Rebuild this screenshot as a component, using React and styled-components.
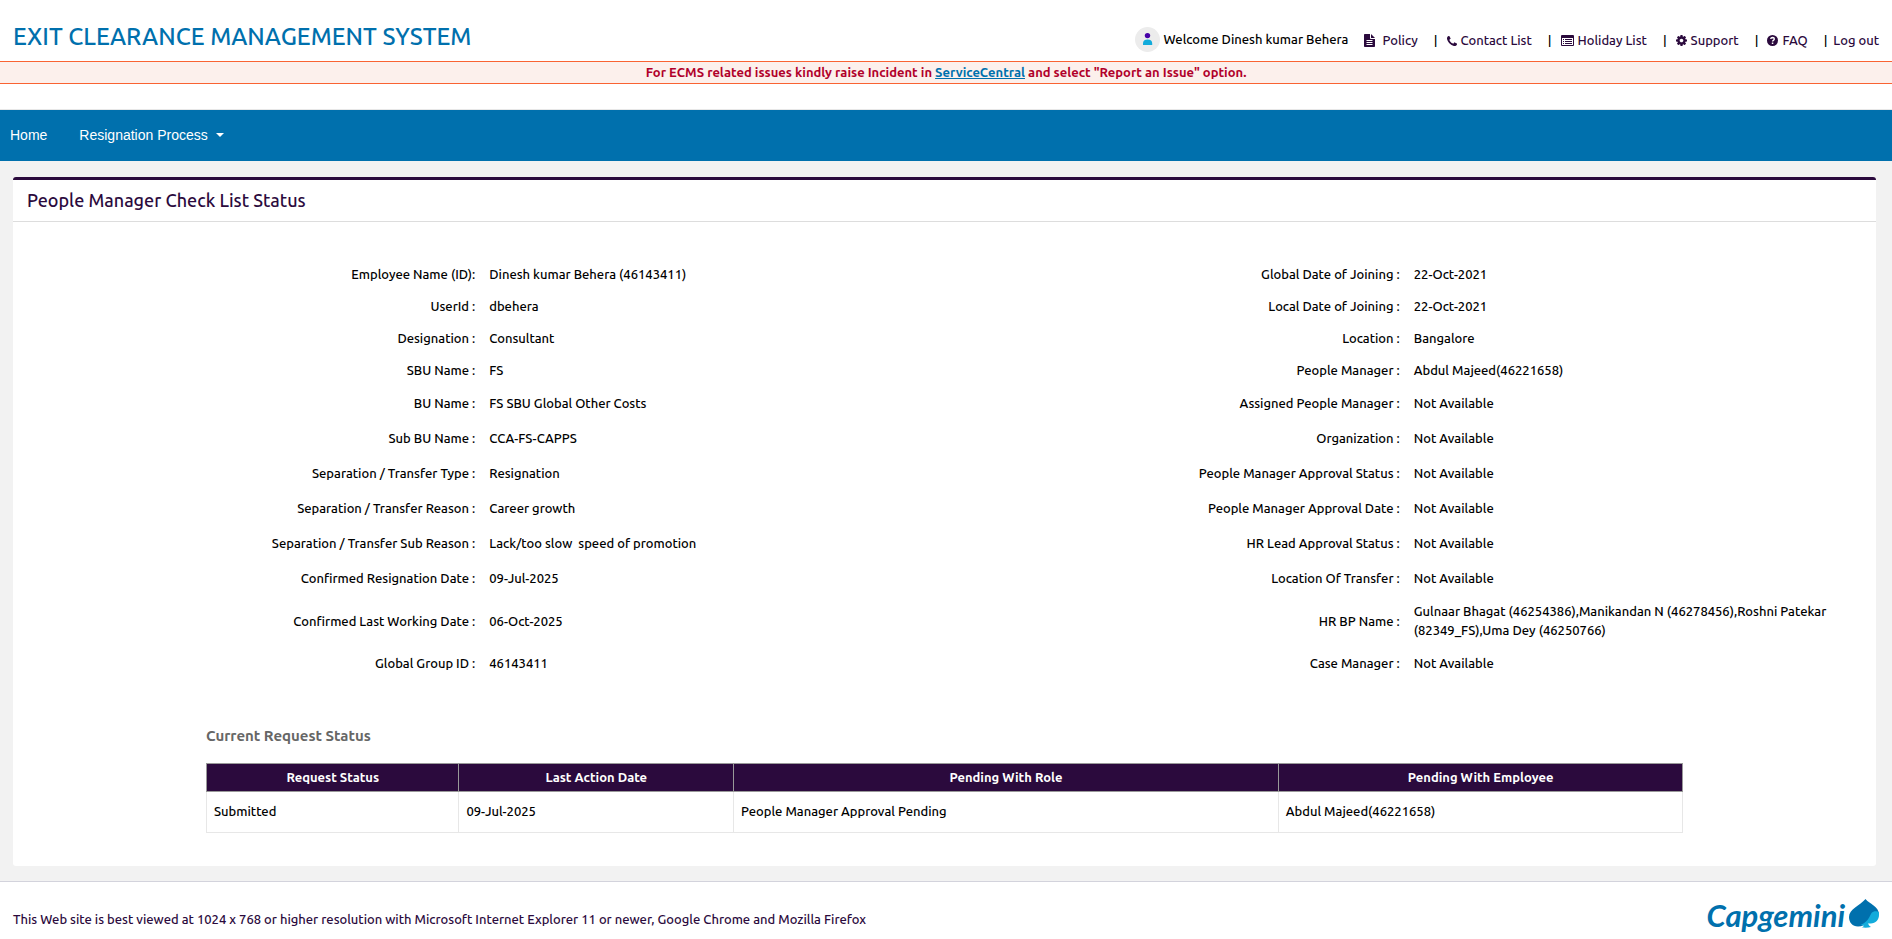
import React from "react";
import styled, { createGlobalStyle } from "styled-components";

const GlobalStyle = createGlobalStyle`
  * { box-sizing: border-box; }
  body {
    margin: 0;
    background: #fff;
    color: #000;
    font-family: Ubuntu, "Noto Sans", sans-serif;
    font-size: 13px;
    font-weight: 500;
    line-height: 19px;
  }
  h1, h2, h3, p, ul, dl, dd { margin: 0; padding: 0; }
`;

const Header = styled.header`
  display: flex;
  justify-content: space-between;
  align-items: flex-end;
  height: 61px;
  padding: 0 13px 9px;
`;

const SiteTitle = styled.h1`
  color: #0070ad;
  font-size: 24px;
  font-weight: 500;
  line-height: 30px;
`;

const UserArea = styled.div`
  display: flex;
  align-items: center;
  gap: 16px;
`;

const Welcome = styled.div`
  display: flex;
  align-items: center;
  gap: 4px;
`;

const UtilityList = styled.ul`
  display: flex;
  list-style: none;
  padding-top: 2px;
`;

const UtilityItem = styled.li`
  display: flex;
  align-items: center;

  & + &::before {
    content: "|";
    margin: 0 9px 0 16px;
  }

  &:last-child::before {
    margin-right: 6px;
  }
`;

const UtilityLink = styled.a`
  display: flex;
  align-items: center;
  gap: ${(p) => (p.$wide ? 7 : 4)}px;
  color: #2b0a3d;
  text-decoration: none;

  svg { display: block; fill: currentColor; }
`;

const Notice = styled.p`
  padding: 1px 0;
  border-top: 1px solid #f96332;
  border-bottom: 1px solid #f96332;
  background: #fcf0ec;
  color: #b1002a;
  font-weight: 700;
  text-align: center;

  a { color: #0070ad; }
`;

const MainNav = styled.nav`
  display: flex;
  align-items: center;
  gap: 32px;
  height: 52px;
  margin-top: 25px;
  padding: 0 10px 2px;
  border-top: 1px solid #e7e7e7;
  background: #0070ad;
  font: 14px/20px "Liberation Sans", Arial, sans-serif;
`;

const NavLink = styled.a`
  color: #fff;
  text-decoration: none;
`;

const NavButton = styled.button`
  display: flex;
  align-items: center;
  gap: 8px;
  padding: 0;
  border: 0;
  background: none;
  color: #fff;
  font: inherit;

  &::after {
    content: "";
    border: 4px solid transparent;
    border-top-color: #fff;
    border-bottom: 0;
  }
`;

const Main = styled.main`
  padding: 16px 16px 15px 13px;
  background: #f2f2f2;
`;

const Card = styled.section`
  padding-bottom: 33px;
  border-top: 3px solid #2b0a3d;
  border-radius: 3px;
  background: #fff;
`;

const CardTitle = styled.h2`
  padding: 8px 14px 9px;
  border-bottom: 1px solid #ddd;
  color: #2b0a3d;
  font-size: 18px;
  font-weight: 500;
  line-height: 24px;
`;

const Details = styled.div`
  display: grid;
  grid-template-columns: 1fr 1fr;
  padding: 36px 7px 0;
`;

const rowHeights = { compact: 32, normal: 35, tall: 50 };

const DetailRow = styled.div`
  display: grid;
  grid-template-columns: 1fr 1fr;
  align-items: center;
  min-height: ${(p) => rowHeights[p.$size]}px;

  dt { padding: 0 7px; text-align: right; }
  dd { padding: 0 7px; white-space: pre-wrap; }
`;

const RequestStatus = styled.section`
  width: 79.3%;
  margin: 45px auto 0 193px;
`;

const SectionTitle = styled.h3`
  color: #666;
  font-size: 15px;
  font-weight: 700;
  line-height: 20px;
`;

const StatusTable = styled.table`
  width: 100%;
  margin-top: 17px;
  border-collapse: collapse;
  table-layout: fixed;

  th {
    height: 28px;
    padding: 0;
    border: 1px solid #999;
    background: #2b0a3d;
    color: #fff;
    font-weight: 700;
  }
  td {
    height: 41px;
    padding: 0 7px 2px;
    border: 1px solid #e7e7e7;
  }
`;

const Column = styled.col`
  width: ${(p) => p.$share}%;
`;

const Footer = styled.footer`
  display: flex;
  align-items: flex-start;
  justify-content: space-between;
  height: 58px;
  padding: 0 13px;
  border-top: 1px solid #d3d3dc;
  color: #2b0a3d;
`;

const FooterText = styled.p`
  padding-top: 28px;
`;

const Brand = styled.a`
  display: flex;
  align-items: flex-start;
  gap: 4px;
  padding-top: 17px;
  color: #0070ad;
  font: italic 700 31px/32px Lato, sans-serif;
  text-decoration: none;
`;

const Avatar = () => (
  <svg width="25" height="25" viewBox="0 0 25 25" aria-hidden="true">
    <circle cx="12.500" cy="12.500" r="12.500" fill="#ececec" />
    <circle cx="12.500" cy="8.600" r="2.700" fill="#4701a7" />
    <path d="M8 18v-1.500q0-4 4.600-4t4.600 4V18z" fill="#12abdb" />
  </svg>
);

const FileIcon = () => (
  <svg width="11" height="13" viewBox="0 0 11 13" aria-hidden="true">
    <path fillRule="evenodd" d="M.8 0H6v4.200q0 .8.800.8H11v7.200q0 .8-.8.800H.8Q0 13 0 12.200V.8Q0 0 .8 0zM2.500 6v1h6V6zm0 2v1h6V8zm0 2v1h6v-1zM7 0l4 4H7z" />
  </svg>
);

const PhoneIcon = () => (
  <svg width="10" height="10" viewBox="0 128 1408 1408" aria-hidden="true">
    <path d="M1408 1240q0 27-10 70.500t-21 68.500q-21 50-122 106-94 51-186 51-27 0-53-3.500t-57.500-12.500-47-14.500-55.500-20.500-49-18q-98-35-175-83-127-79-264-216t-216-264q-48-77-83-175-3-9-18-49t-20.500-55.500-14.500-47-12.500-57.500-3.500-53q0-92 51-186 56-101 106-122 25-11 68.500-21t70.500-10q14 0 21 3 18 6 53 76 11 19 30 54t35 63.500 31 53.500q3 4 17.500 25t21.500 35.500 7 28.500q0 20-28.500 50t-62 55-62 53-28.500 46q0 9 5 22.500t8.500 20.500 14 24 11.500 19q76 137 174 235t235 174q2 1 19 11.500t24 14 20.500 8.500 22.500 5q18 0 46-28.500t53-62 55-62 50-28.500q14 0 28.500 7t35.500 21.500 25 17.500q25 15 53.500 31t63.500 35 54 30q70 35 76 53 3 7 3 21z" />
  </svg>
);

const ListIcon = () => (
  <svg width="13" height="11" viewBox="0 0 13 11" aria-hidden="true">
    <path fillRule="evenodd" d="M1 0h11q1 0 1 1v9q0 1-1 1H1q-1 0-1-1V1q0-1 1-1zM1 3v7h11V3zm1 1h1v1H2zm2 0h7v1H4zM2 6h1v1H2zm2 0h7v1H4zM2 8h1v1H2zm2 0h7v1H4z" />
  </svg>
);

const GearIcon = () => (
  <svg width="11" height="11" viewBox="0 128 1536 1536" aria-hidden="true">
    <path d="M1024 896q0-106-75-181t-181-75-181 75-75 181 75 181 181 75 181-75 75-181zm512-109v222q0 12-8 23t-20 13l-185 28q-19 54-39 91 35 50 107 138 10 12 10 25t-9 23q-27 37-99 108t-94 71q-12 0-26-9l-138-108q-44 23-91 38-16 136-29 186-7 28-36 28h-222q-14 0-24.500-8.500t-11.500-21.500l-28-184q-49-16-90-37l-141 107q-10 9-25 9-14 0-25-11-126-114-165-168-7-10-7-23 0-12 8-23 15-21 51-66.500t54-70.500q-27-50-41-99l-183-27q-13-2-21-12.500t-8-23.500v-222q0-12 8-23t19-13l186-28q14-46 39-92-40-57-107-138-10-12-10-24 0-10 9-23 26-36 98.500-107.500t94.500-71.500q13 0 26 10l138 107q44-23 91-38 16-136 29-186 7-28 36-28h222q14 0 24.500 8.500t11.500 21.500l28 184q49 16 90 37l142-107q9-9 24-9 13 0 25 10 129 119 165 170 7 8 7 22 0 12-8 23-15 21-51 66.500t-54 70.500q26 50 41 98l183 28q13 2 21 12.500t8 23.500z" />
  </svg>
);

const HelpIcon = () => (
  <svg width="11" height="11" viewBox="0 0 11 11" aria-hidden="true">
    <circle cx="5.500" cy="5.500" r="5.500" />
    <path d="M3.700 4q.2-1.500 1.900-1.500 1.700.1 1.700 1.500 0 .8-.9 1.300-.8.500-.8 1.200" style={{ fill: "none" }} stroke="#fff" strokeWidth="1.400" />
    <path d="M4.800 7.500h1.500V9H4.800z" fill="#fff" style={{ fill: "#fff" }} />
  </svg>
);

const SpadeMark = () => (
  <svg width="30" height="30" viewBox="0 0 30 30" aria-hidden="true">
    <path d="M16.500 0C20 4.500 30 7.500 30 15.500L22 24c-1.500-.3-2.700-.8-3.500-1.500C16.500 25.500 13 27.500 9 27.500 3.500 27.500 0 23.500 0 18 0 10 11 6.500 16.500 0z" fill="#0070ad" />
    <path d="M30 13.500c-1.500-1.700-5.500-2-7.500.5-1.500 2.500-2.500 6-5.500 8.500-1.500 1.500-3.500 2.700-5.500 3.500 1 .3 2.200.5 3.200.5.300.800-1 1.700-2.200 1.800 3 .6 6.500.5 9.500-.3-1.500-.8-2.500-2-2.800-3.800C25.500 25.800 30 21.500 30 16z" fill="#12abdb" />
  </svg>
);

const utilityLinks = [
  { label: "Policy", icon: <FileIcon />, wide: true },
  { label: "Contact List", icon: <PhoneIcon /> },
  { label: "Holiday List", icon: <ListIcon /> },
  { label: "Support", icon: <GearIcon /> },
  { label: "FAQ", icon: <HelpIcon /> },
  { label: "Log out" },
];

const employeeDetails = [
  ["Employee Name (ID):", "Dinesh kumar Behera (46143411)", "compact"],
  ["UserId :", "dbehera", "compact"],
  ["Designation :", "Consultant", "compact"],
  ["SBU Name :", "FS", "compact"],
  ["BU Name :", "FS SBU Global Other Costs", "normal"],
  ["Sub BU Name :", "CCA-FS-CAPPS", "normal"],
  ["Separation / Transfer Type :", "Resignation", "normal"],
  ["Separation / Transfer Reason :", "Career growth", "normal"],
  ["Separation / Transfer Sub Reason :", "Lack/too slow  speed of promotion", "normal"],
  ["Confirmed Resignation Date :", "09-Jul-2025", "normal"],
  ["Confirmed Last Working Date :", "06-Oct-2025", "tall"],
  ["Global Group ID :", "46143411", "normal"],
];

const processDetails = [
  ["Global Date of Joining :", "22-Oct-2021", "compact"],
  ["Local Date of Joining :", "22-Oct-2021", "compact"],
  ["Location :", "Bangalore", "compact"],
  ["People Manager :", "Abdul Majeed(46221658)", "compact"],
  ["Assigned People Manager :", "Not Available", "normal"],
  ["Organization :", "Not Available", "normal"],
  ["People Manager Approval Status :", "Not Available", "normal"],
  ["People Manager Approval Date :", "Not Available", "normal"],
  ["HR Lead Approval Status :", "Not Available", "normal"],
  ["Location Of Transfer :", "Not Available", "normal"],
  ["HR BP Name :", "Gulnaar Bhagat (46254386),Manikandan N (46278456),Roshni Patekar (82349_FS),Uma Dey (46250766)", "tall"],
  ["Case Manager :", "Not Available", "normal"],
];

const DetailList = ({ rows }) => (
  <dl>
    {rows.map(([label, value, size]) => (
      <DetailRow key={label} $size={size}>
        <dt>{label}</dt>
        <dd>{value}</dd>
      </DetailRow>
    ))}
  </dl>
);

export default function App() {
  return (
    <>
      <GlobalStyle />
      <Header>
        <SiteTitle>EXIT CLEARANCE MANAGEMENT SYSTEM</SiteTitle>
        <UserArea>
          <Welcome>
            <Avatar />
            <span>Welcome Dinesh kumar Behera</span>
          </Welcome>
          <UtilityList>
            {utilityLinks.map(({ label, icon, wide }) => (
              <UtilityItem key={label}>
                <UtilityLink href="#" $wide={wide}>
                  {icon}
                  <span>{label}</span>
                </UtilityLink>
              </UtilityItem>
            ))}
          </UtilityList>
        </UserArea>
      </Header>
      <Notice>
        For ECMS related issues kindly raise Incident in <a href="#">ServiceCentral</a> and select "Report an Issue" option.
      </Notice>
      <MainNav>
        <NavLink href="#">Home</NavLink>
        <NavButton type="button">Resignation Process</NavButton>
      </MainNav>
      <Main>
        <Card>
          <CardTitle>People Manager Check List Status</CardTitle>
          <Details>
            <DetailList rows={employeeDetails} />
            <DetailList rows={processDetails} />
          </Details>
          <RequestStatus>
            <SectionTitle>Current Request Status</SectionTitle>
            <StatusTable>
              <colgroup>
                <Column $share={17.1} />
                <Column $share={18.6} />
                <Column $share={36.9} />
                <Column $share={27.4} />
              </colgroup>
              <thead>
                <tr>
                  <th scope="col">Request Status</th>
                  <th scope="col">Last Action Date</th>
                  <th scope="col">Pending With Role</th>
                  <th scope="col">Pending With Employee</th>
                </tr>
              </thead>
              <tbody>
                <tr>
                  <td>Submitted</td>
                  <td>09-Jul-2025</td>
                  <td>People Manager Approval Pending</td>
                  <td>Abdul Majeed(46221658)</td>
                </tr>
              </tbody>
            </StatusTable>
          </RequestStatus>
        </Card>
      </Main>
      <Footer>
        <FooterText>
          This Web site is best viewed at 1024 x 768 or higher resolution with Microsoft Internet Explorer 11 or newer, Google Chrome and Mozilla Firefox
        </FooterText>
        <Brand href="#">
          <span>Capgemini</span>
          <SpadeMark />
        </Brand>
      </Footer>
    </>
  );
}
